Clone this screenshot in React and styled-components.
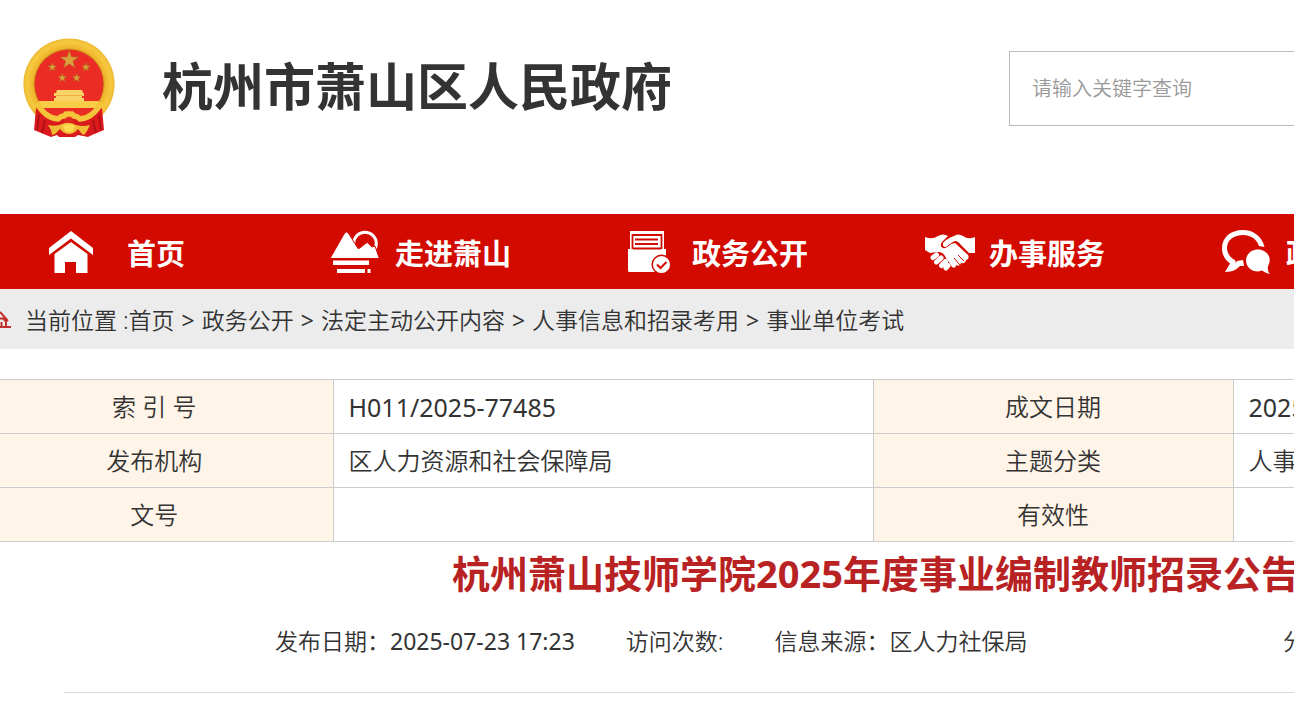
import React from "react";
import styled, { createGlobalStyle } from "styled-components";

const Global = createGlobalStyle`
  * { box-sizing: border-box; }
  body {
    margin: 0;
    background: #fff;
    color: #333;
    font-family: "Noto Sans", "Noto Sans CJK SC", sans-serif;
    font-weight: 350;
    overflow-x: hidden;
  }
  a { color: inherit; text-decoration: none; }
`;

const Header = styled.header`
  display: flex;
  align-items: flex-start;
  justify-content: space-between;
  height: 214px;
  padding: 38px 0 0 23px;
`;

const Brand = styled.a`
  display: flex;
  align-items: center;
  gap: 47px;
  height: 100px;
`;

const BrandName = styled.h1`
  margin: 0;
  padding-bottom: 8px;
  font-family: "Noto Sans CJK SC", sans-serif;
  font-size: 51px;
  line-height: 72px;
  font-weight: 700;
  white-space: nowrap;
`;

const SearchInput = styled.input`
  width: 285px;
  height: 75px;
  margin-top: 13px;
  padding: 0 22px;
  border: 1px solid #bbb;
  border-right: 0;
  border-radius: 0;
  outline: 0;
  background: #fff;
  color: #333;
  font: inherit;
  font-size: 20px;
  &::placeholder { color: #999; opacity: 1; }
`;

const Nav = styled.nav`
  overflow: hidden;
  background: #d20a00;
  color: #fff;
`;

const NavList = styled.ul`
  display: flex;
  margin: 0;
  padding: 0;
  list-style: none;
`;

const NavItem = styled.li`
  flex: 0 0 297px;
`;

const NavLink = styled.a`
  display: flex;
  align-items: center;
  gap: ${(p) => (p.$home ? 28 : 14)}px;
  height: 75px;
  padding-left: ${(p) => (p.$home ? 49 : 34)}px;
  font-size: 29px;
  font-weight: 700;
  white-space: nowrap;
`;

const NavIcon = styled.svg`
  flex: none;
  width: 50px;
  height: 44px;
  fill: #fff;
`;

const Crumbs = styled.nav`
  display: flex;
  align-items: center;
  height: 60px;
  background: #ececec;
  font-size: 23px;
  white-space: nowrap;
`;

const CrumbIcon = styled.svg`
  flex: none;
  width: 11px;
  height: 20px;
  margin-right: 14px;
`;

const CrumbList = styled.ol`
  display: flex;
  margin: 0;
  padding: 0;
  list-style: none;
`;

const Crumb = styled.li`
  & + &::before {
    content: ">";
    margin: 0 7px;
    font-weight: 400;
  }
`;

const InfoTable = styled.table`
  width: 100%;
  margin-top: 30px;
  border-collapse: collapse;
  table-layout: fixed;
  font-size: 24px;
  line-height: 36px;
`;

const InfoRow = styled.tr`
  height: 54px;
`;

const Label = styled.th`
  width: ${(p) => p.$width}px;
  padding: 0 ${(p) => (p.$first ? 24 : 0)}px 0 0;
  border: 1px solid #ccc;
  border-left-width: ${(p) => (p.$first ? 0 : 1)}px;
  background: #fff4e8;
  font-weight: inherit;
  text-align: center;
`;

const Value = styled.td`
  width: ${(p) => (p.$wide ? "540px" : "auto")};
  padding: 0 0 0 15px;
  border: 1px solid #ccc;
  border-right-width: ${(p) => (p.$wide ? 1 : 0)}px;
  font-size: ${(p) => (p.$numeric ? 25 : 24)}px;
  font-weight: ${(p) => (p.$numeric ? 400 : "inherit")};
  white-space: nowrap;
  overflow: hidden;
`;

const Article = styled.main`
  padding-left: 64px;
`;

const Title = styled.h2`
  margin: 0;
  padding-left: 388px;
  overflow: hidden;
  color: #b92223;
  font-size: 38px;
  line-height: 62px;
  font-weight: 700;
  white-space: nowrap;
`;

const Meta = styled.div`
  display: flex;
  align-items: center;
  gap: 51px;
  height: 89px;
  padding: 0 0 16px 211px;
  overflow: hidden;
  border-bottom: 1px solid #d8d8d8;
  font-size: 23px;
  white-space: nowrap;
`;

const Time = styled.time`
  font-weight: 400;
`;

const Share = styled.span`
  flex: 0 0 11px;
  min-width: 0;
  margin-left: auto;
`;

const starPoints = (cx, cy, r) =>
  Array.from({ length: 10 }, (_, i) => {
    const a = (i * Math.PI) / 5 - Math.PI / 2;
    const q = i % 2 ? r * 0.4 : r;
    return `${(cx + q * Math.cos(a)).toFixed(1)},${(cy + q * Math.sin(a)).toFixed(1)}`;
  }).join(" ");

const Emblem = () => (
  <svg width="92" height="100" viewBox="0 0 92 100" aria-hidden="true">
    <defs>
      <radialGradient id="gold" cx="50%" cy="50%" r="50%">
        <stop offset="0.74" stopColor="#b9801a" />
        <stop offset="0.79" stopColor="#efb52b" />
        <stop offset="0.92" stopColor="#f6c93f" />
        <stop offset="1" stopColor="#eeb935" />
      </radialGradient>
    </defs>
    <circle cx="46" cy="46" r="45.600" fill="url(#gold)" />
    <circle cx="46" cy="46" r="34.500" fill="#ea2c25" />
    <g fill="#d9a03c" stroke="#b06a20" strokeWidth="0.500">
      <polygon points={starPoints(46.3, 22, 9.5)} />
      <polygon points={starPoints(29.3, 29.3, 4.5)} />
      <polygon points={starPoints(63, 29.3, 4.5)} />
      <polygon points={starPoints(39.3, 40, 4.5)} />
      <polygon points={starPoints(53.6, 40, 4.5)} />
    </g>
    <path d="M34 52h25l1 3h1v3h-2v2h2v3H31v-3h2v-2h-2v-3h2z" fill="#f9d465" />
    <path d="M33 57.500h26" stroke="#ecae45" strokeWidth="1" />
    <path d="M16 63h60v4l-3 3H19l-3-3z" fill="#f9cd48" />
    <path d="M13 70l6 2 12 9h30l12-9 6-2 2 22-12 5-4 2-10-2-3 2H36l-2-2-6 2-5-2-12-5z" fill="#db1a1d" />
    <path d="M16 77l-2 15M22 82l-3 13M76 77l2 15M70 82l3 13M34 88l-4 4M58 88l4 4" stroke="#a90f14" strokeWidth="1.600" fill="none" />
    <path d="M19 70h54q-6 10-16 11H35q-10-1-16-11z" fill="#ea2c25" />
    <path d="M14 65q8 15 21 16 3-3 6-3l2-2h6l2 2q3 0 6 3 13-1 21-16" fill="none" stroke="#f4c43a" strokeWidth="5.500" />
    <path d="M41 82q5-4 10 0v2H41z" fill="#dc2a20" />
    <path d="M25 87q8 2 14-1 7-3 14 1 7 2 14 0l-3 6-3 4-2-1-4-5-3 3q-6 4-12 0l-3-3-5 5-3 1-1-5z" fill="#efbd35" />
    <path d="M40 88q6-4 12 0l-2 5q-4 2-8 0z" fill="#ffd94f" />
  </svg>
);

const HomeIcon = () => (
  <NavIcon viewBox="0 0 50 44" aria-hidden="true">
    <path d="M22 1l22 17v7L22 8.500 0 25v-7z" />
    <path d="M22 12l16.500 12v19H27V32H16v11H5.500V24z" />
  </NavIcon>
);

const HillIcon = () => (
  <NavIcon viewBox="0 0 50 44" aria-hidden="true">
    <circle cx="34" cy="13.500" r="11.300" fill="none" stroke="#fff" strokeWidth="3" />
    <path d="M-1 28.500L13 4q2.500-4 5 0l9 14.500 2-.5 6-5q1.500-1 3 1l3 3 3-1 4 11.500v1z" stroke="#d20a00" strokeWidth="1" />
    <path d="M2 30.500h36v4.500H2zM6 39h28v4H6zM36.500 39h3v4h-3z" />
  </NavIcon>
);

const DocumentIcon = () => (
  <NavIcon viewBox="0 0 50 44" aria-hidden="true">
    <path d="M2 1h34v18h2v23H1q-1 0-1-2V19h2z" />
    <path d="M4.500 19V5h29v14M7 9.500h23M7 14h23M5 18.500h28" fill="none" stroke="#d20a00" strokeWidth="1.800" />
    <circle cx="33.500" cy="34.500" r="9.300" stroke="#d20a00" strokeWidth="1.500" />
    <path d="M29 34.500l3.500 3.500 6-6" fill="none" stroke="#d20a00" strokeWidth="2" />
  </NavIcon>
);

const HandshakeIcon = () => (
  <NavIcon viewBox="0 0 50 44" aria-hidden="true">
    <path d="M0 7q7 3 13-1 5-3 10 0l-6 6q-3 4 1 6 3 1 8-4l4-1 13 12q2 4-2 5-1 4-5 3-1 4-5 2 0 4-4 2-3-5-6-9-3-7-9-6l-7 1-5-3z" />
    <path d="M50 7q-7 3-12-1-5-3-9 0-8 3-11 7-1 4 3 4 6-5 9-6 3 0 6 4l8 8 6 0z" />
    <path d="M8 27.500l3.500-2.500M11.500 32l4.500-4M16.500 35.500l4-4M21 38l2-2.500" stroke="#fff" strokeWidth="5" strokeLinecap="round" />
    <path d="M29 28l6 7M33 25l6 6" stroke="#d20a00" strokeWidth="1" />
  </NavIcon>
);

const ChatIcon = () => (
  <NavIcon viewBox="0 0 50 44" aria-hidden="true">
    <path d="M42.500 17C40 6 31 0 21 0 8 0 0 8 0 18c0 7 3 12 8 15.500L3 42c8 0 12-3 15-6h4l-1-6-6 1-2 3q2-4-2-5C7 26 5 22 5 18 5 10 12 5 21 5s14 5 16 11z" />
    <path d="M36 19.500c-7 0-12 5-12 11s5 11 12 11l4-1q4 3 8 3.500-3-3-2-8c5-9-2-16.500-10-16.500z" />
  </NavIcon>
);

const navItems = [
  { text: "首页", Icon: HomeIcon, home: true },
  { text: "走进萧山", Icon: HillIcon },
  { text: "政务公开", Icon: DocumentIcon },
  { text: "办事服务", Icon: HandshakeIcon },
  { text: "政民互动", Icon: ChatIcon },
];

const crumbs = ["首页", "政务公开", "法定主动公开内容", "人事信息和招录考用", "事业单位考试"];

const infoRows = [
  { cells: ["索 引 号", "H011/2025-77485", "成文日期", "2025-07-23"], numeric: true },
  { cells: ["发布机构", "区人力资源和社会保障局", "主题分类", "人事信息"] },
  { cells: ["文号", "", "有效性", ""] },
];

export default function App() {
  return (
    <>
      <Global />
      <Header>
        <Brand href="#">
          <Emblem />
          <BrandName>杭州市萧山区人民政府</BrandName>
        </Brand>
        <SearchInput type="search" aria-label="搜索" placeholder="请输入关键字查询" />
      </Header>
      <Nav>
        <NavList>
          {navItems.map(({ text, Icon, home }) => (
            <NavItem key={text}>
              <NavLink href="#" $home={home}>
                <Icon />
                {text}
              </NavLink>
            </NavItem>
          ))}
        </NavList>
      </Nav>
      <Crumbs>
        <CrumbIcon viewBox="0 0 11 20" aria-hidden="true">
          <path d="M0 3l8 9M0 9.500h3l3 3V17M0 18h11M1.500 13v4" fill="none" stroke="#c4302e" strokeWidth="2" />
        </CrumbIcon>
        <span>当前位置 :</span>
        <CrumbList>
          {crumbs.map((c) => (
            <Crumb key={c}>
              <a href="#">{c}</a>
            </Crumb>
          ))}
        </CrumbList>
      </Crumbs>
      <InfoTable>
        <tbody>
          {infoRows.map(({ cells: [a, b, c, d], numeric }) => (
            <InfoRow key={a}>
              <Label scope="row" $width={333} $first>{a}</Label>
              <Value $wide $numeric={numeric}>{b}</Value>
              <Label scope="row" $width={360}>{c}</Label>
              <Value $numeric={numeric}>{d}</Value>
            </InfoRow>
          ))}
        </tbody>
      </InfoTable>
      <Article>
        <Title>杭州萧山技师学院2025年度事业编制教师招录公告</Title>
        <Meta>
          <span>发布日期：<Time>2025-07-23 17:23</Time></span>
          <span>访问次数:</span>
          <span>信息来源：区人力社保局</span>
          <Share>分享</Share>
        </Meta>
      </Article>
    </>
  );
}
